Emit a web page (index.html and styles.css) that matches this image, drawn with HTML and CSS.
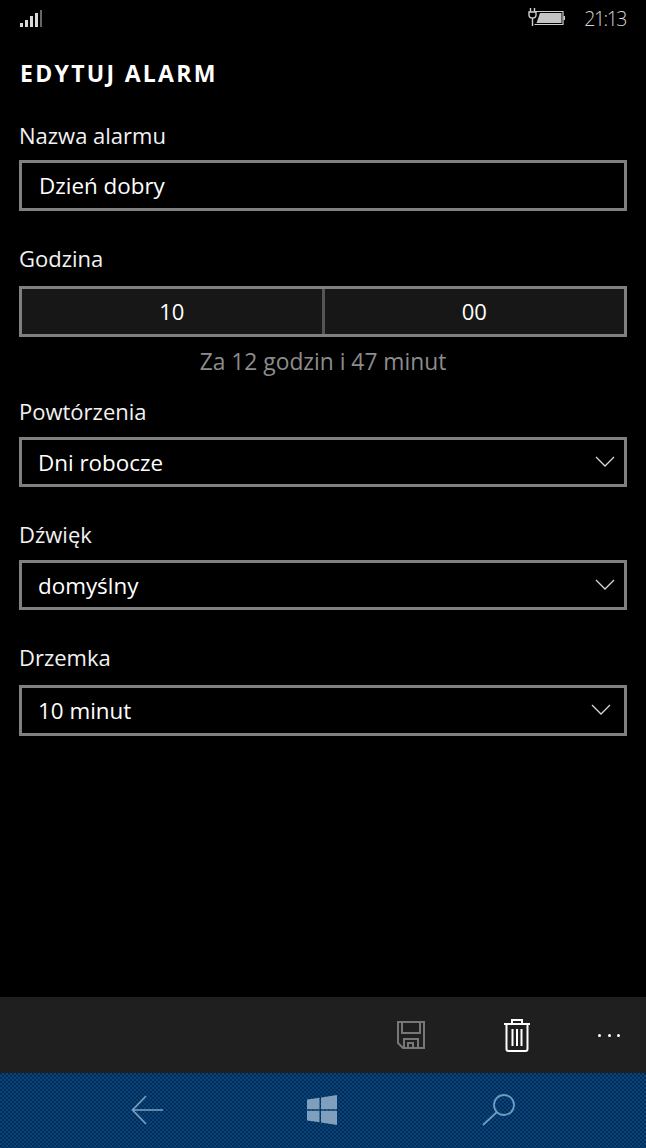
FILE: index.html
```html
<!DOCTYPE html>
<html lang="pl">
<head>
    <meta charset="UTF-8">
    <meta name="viewport" content="width=device-width, initial-scale=1.0">
    <title>Edytuj alarm</title>
    <link rel="stylesheet" href="styles.css">
</head>
<body>

<div class="phone">

    <!-- Status bar -->
    <div class="status-bar">
        <svg class="signal" width="24" height="20" viewBox="0 0 24 20">
            <rect x="0" y="14" width="3" height="4" fill="#d8d8d8"/>
            <rect x="5" y="11" width="3" height="7" fill="#d8d8d8"/>
            <rect x="10" y="7" width="3" height="11" fill="#d8d8d8"/>
            <rect x="15" y="4" width="3" height="14" fill="#d8d8d8"/>
            <rect x="20" y="1" width="2" height="17" fill="#666"/>
        </svg>
        <div class="status-right">
            <svg class="battery" width="37" height="20" viewBox="0 0 37 20">
                <path d="M2.500 1v4M6.500 1v4M1 5h7v3q0 3-3.500 3T1 8zM4.500 11v8" fill="none" stroke="#d0d0d0" stroke-width="1.400"/>
                <path d="M6.500 4.500H35v13H6.500" fill="none" stroke="#d0d0d0" stroke-width="1.200"/>
                <path d="M12 6h21.500v10H8.500z" fill="#c4c4c4"/>
                <rect x="35.500" y="9" width="1.500" height="4" fill="#d0d0d0"/>
            </svg>
            <span class="clock">21:13</span>
        </div>
    </div>

    <h1 class="page-title">EDYTUJ ALARM</h1>

    <div class="form">
        <label class="field-label label-name">Nazwa alarmu</label>
        <div class="box text-box">Dzień dobry</div>

        <label class="field-label label-time">Godzina</label>
        <div class="box time-box">
            <div class="time-cell">10</div>
            <div class="time-cell">00</div>
        </div>
        <p class="time-hint">Za 12 godzin i 47 minut</p>

        <label class="field-label label-repeat">Powtórzenia</label>
        <div class="box select-box">
            <span>Dni robocze</span>
            <svg class="chevron" width="20" height="12" viewBox="0 0 20 12"><path d="M1 1l9 9 9-9" fill="none" stroke="#d8d8d8" stroke-width="1.300"/></svg>
        </div>

        <label class="field-label">Dźwięk</label>
        <div class="box select-box">
            <span>domyślny</span>
            <svg class="chevron" width="20" height="12" viewBox="0 0 20 12"><path d="M1 1l9 9 9-9" fill="none" stroke="#d8d8d8" stroke-width="1.300"/></svg>
        </div>

        <label class="field-label label-snooze">Drzemka</label>
        <div class="box select-box snooze-box">
            <span>10 minut</span>
            <svg class="chevron" width="20" height="12" viewBox="0 0 20 12"><path d="M1 1l9 9 9-9" fill="none" stroke="#d8d8d8" stroke-width="1.300"/></svg>
        </div>
    </div>

    <!-- App bar -->
    <div class="app-bar">
        <svg class="save-icon" width="30" height="30" viewBox="0 0 30 30" fill="none" stroke="#777" stroke-width="2">
            <path d="M2 2h26v26H7l-5-5z"/>
            <path d="M6 2v11h18V2"/>
            <path d="M8 28v-9h14v9M12 28v-5h5v5"/>
        </svg>
        <svg class="trash-icon" width="28" height="34" viewBox="0 0 28 34" fill="none" stroke="#fff" stroke-width="2">
            <path d="M1 6h26M9 6V2h10v4"/>
            <path d="M3.500 6v25q0 2 2 2h17q2 0 2-2V6"/>
            <path d="M9.500 11v17M14 11v17M18.500 11v17"/>
        </svg>
        <div class="more-dots"><i></i><i></i><i></i></div>
    </div>

    <!-- Nav bar -->
    <div class="nav-bar">
        <svg class="back-icon" width="32" height="30" viewBox="0 0 32 30" fill="none" stroke="#7ea3c2" stroke-width="1.600">
            <path d="M15 1L1.500 15 15 29M1.500 15H32"/>
        </svg>
        <svg class="win-icon" width="30" height="30" viewBox="0 0 30 30" fill="#7f9fbd">
            <path d="M0 4.500l12.500-1.800v11.500H0zM14 2.400L30 0v14.200H14zM0 15.800h12.500v11.500L0 25.500zM14 15.800h16V30l-16-2.400z"/>
        </svg>
        <svg class="search-icon" width="34" height="32" viewBox="0 0 34 32" fill="none" stroke="#6f9cc0" stroke-width="1.800">
            <circle cx="22" cy="11" r="10"/>
            <path d="M15 18L1 31"/>
        </svg>
    </div>

</div>

</body>
</html>
```

FILE: styles.css
```css
* {
    box-sizing: border-box;
}

body {
    margin: 0;
    background-color: #000;
    font-family: "Open Sans", "Noto Sans", Arial, sans-serif;
    color: #fff;
}

.phone {
    width: 646px;
    height: 1148px;
    display: flex;
    flex-direction: column;
    overflow: hidden;
}

.status-bar {
    height: 36px;
    padding: 0 20px;
    display: flex;
    justify-content: space-between;
    align-items: flex-start;
}

.signal {
    margin-top: 9px;
}

.status-right {
    display: flex;
    align-items: flex-start;
    gap: 19px;
}

.battery {
    margin-top: 7px;
}

.clock {
    margin-top: 6px;
    font-size: 19.500px;
    line-height: 26px;
    font-weight: 300;
    color: #d4d4d4;
    letter-spacing: -1.500px;
}

.page-title {
    margin: 21px 0 0 20px;
    font-size: 23px;
    line-height: 32px;
    font-weight: 700;
    letter-spacing: 2.300px;
}

.form {
    padding: 0 19px;
    flex: 1;
}

.field-label {
    display: block;
    height: 32px;
    margin-top: 31px;
    margin-bottom: 10px;
    font-size: 22px;
    line-height: 32px;
    color: #f2f2f2;
}

.label-name {
    margin-top: 30px;
    margin-bottom: 9px;
}

.label-time {
    margin-bottom: 12px;
}

.label-repeat {
    margin-top: 17px;
}

.label-snooze {
    margin-bottom: 12px;
}

.box {
    border: 3px solid #808080;
    font-size: 22.400px;
    height: 50px;
}

.text-box {
    height: 51px;
    padding-left: 17px;
    line-height: 45px;
}

.time-box {
    height: 51px;
    display: flex;
    background-color: #171717;
}

.time-cell {
    flex: 1;
    text-align: center;
    line-height: 45px;
    font-size: 22px;
}

.time-cell + .time-cell {
    border-left: 3px solid #555;
}

.time-hint {
    margin: 9px 0 0;
    text-align: center;
    font-size: 22.800px;
    line-height: 32px;
    color: #8c8c8c;
}

.select-box {
    padding: 0 9px 0 16px;
    display: flex;
    justify-content: space-between;
    align-items: center;
}

.snooze-box {
    height: 51px;
    padding-right: 13px;
    padding-bottom: 1px;
}

.app-bar {
    height: 76px;
    background-color: #1f1f1f;
    display: flex;
    align-items: center;
    padding-left: 396px;
}

.trash-icon {
    margin-left: 77px;
}

.more-dots {
    margin-left: 67px;
    display: flex;
    gap: 6.500px;
}

.more-dots i {
    width: 3px;
    height: 3px;
    border-radius: 50%;
    background-color: #fff;
}

.nav-bar {
    height: 75px;
    background-color: #03396b;
    background-image: repeating-conic-gradient(#08457c 0 25%, #022c55 0 50%);
    background-size: 4px 4px;
    display: flex;
    align-items: center;
    padding: 0 0 1px 131px;
}

.win-icon {
    margin-left: 144px;
}

.search-icon {
    margin-left: 145px;
}
```
